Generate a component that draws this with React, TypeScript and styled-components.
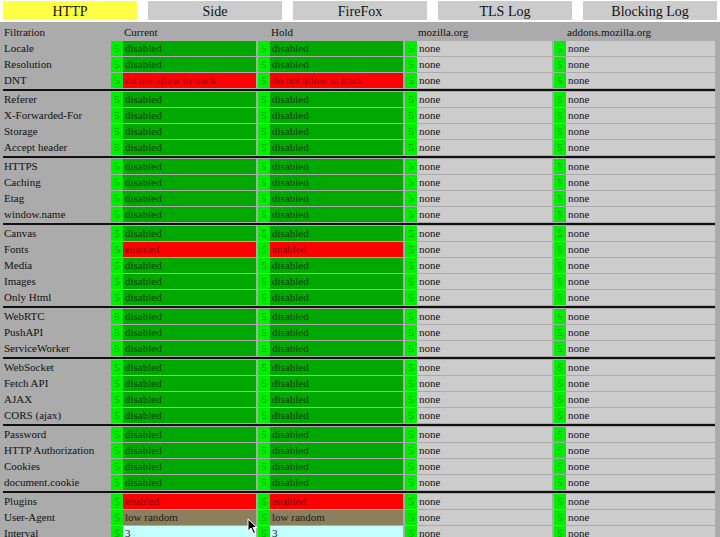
import React from 'react';
import styled, { createGlobalStyle } from 'styled-components';

const GlobalStyle = createGlobalStyle`
    html, body {
        margin: 0;
        padding: 0;
        overflow: hidden;
        background: #ababab;
        font-family: "Liberation Serif", "Times New Roman", serif;
    }
`;

type Kind = 'off' | 'on' | 'ua' | 'num';

interface Setting {
    label: string
    text: string
    kind: Kind
}

const off = (label: string): Setting => ({ label, text: 'disabled', kind: 'off' });

const GROUPS: Setting[][] = [
    [off('Locale'), off('Resolution'), { label: 'DNT', text: 'do not allow to track', kind: 'on' }],
    [off('Referer'), off('X-Forwarded-For'), off('Storage'), off('Accept header')],
    [off('HTTPS'), off('Caching'), off('Etag'), off('window.name')],
    [off('Canvas'), { label: 'Fonts', text: 'enabled', kind: 'on' }, off('Media'), off('Images'), off('Only Html')],
    [off('WebRTC'), off('PushAPI'), off('ServiceWorker')],
    [off('WebSocket'), off('Fetch API'), off('AJAX'), off('CORS (ajax)')],
    [off('Password'), off('HTTP Authorization'), off('Cookies'), off('document.cookie')],
    [
        { label: 'Plugins', text: 'enabled', kind: 'on' },
        { label: 'User-Agent', text: 'low random', kind: 'ua' },
        { label: 'Interval', text: '3', kind: 'num' },
    ],
];

const TABS = ['HTTP', 'Side', 'FireFox', 'TLS Log', 'Blocking Log'];
const SITES = ['mozilla.org', 'addons.mozilla.org'];

const KIND_COLORS: Record<Kind, { bg: string, fg: string }> = {
    off: { bg: '#00a800', fg: '#0b3d0b' },
    on: { bg: '#ff0000', fg: '#8a0000' },
    ua: { bg: '#8c7f5e', fg: '#1e1a10' },
    num: { bg: '#c4ffff', fg: '#111' },
};

const TabBar = styled.div`
    display: flex;
    gap: 11px;
    padding: 1px 3px 2px 3px;
    background: #fff;
`;

const Tab = styled.div<{ $active?: boolean }>`
    width: 134px;
    height: 19px;
    overflow: hidden;
    line-height: 22px;
    text-align: center;
    font-size: 14px;
    color: #111;
    background: ${p => (p.$active ? '#ffff44' : '#cccccc')};
`;

const Table = styled.div`
    display: flex;
    flex-direction: column;
`;

const Row = styled.div<{ $head?: boolean }>`
    display: grid;
    grid-template-columns: 109px 145px 145px 147px 161px;
    column-gap: 2px;
    height: ${p => (p.$head ? '18px' : '15px')};
    margin-bottom: 1px;
    font-size: 11px;
    line-height: ${p => (p.$head ? '20px' : '15px')};
`;

const Label = styled.div`
    padding-left: 4px;
    color: #111;
    white-space: nowrap;
    overflow: hidden;
`;

const HeadCell = styled.div`
    padding-left: 13px;
    color: #111;
    white-space: nowrap;
`;

const Pair = styled.div`
    display: flex;
`;

const Level = styled.div`
    width: 12px;
    flex: none;
    text-align: center;
    background: #00ee00;
    color: #00a000;
`;

const Value = styled.div<{ $kind?: Kind }>`
    flex: 1;
    padding-left: 2px;
    white-space: nowrap;
    overflow: hidden;
    background: ${p => (p.$kind ? KIND_COLORS[p.$kind].bg : '#cccccc')};
    color: ${p => (p.$kind ? KIND_COLORS[p.$kind].fg : '#111')};
`;

const Separator = styled.div`
    height: 2px;
    margin: 0 5px 1px 3px;
    background: #111;
`;

const Cursor = styled.svg`
    position: absolute;
    left: 247px;
    top: 518px;
`;

function SettingRow({ setting }: { setting: Setting }): React.JSX.Element {
    return <Row>
        <Label>{setting.label}</Label>
        <Pair>
            <Level>5</Level>
            <Value $kind={setting.kind}>{setting.text}</Value>
        </Pair>
        <Pair>
            <Level>5</Level>
            <Value $kind={setting.kind}>{setting.text}</Value>
        </Pair>
        {SITES.map(s =>
            <Pair key={s}>
                <Level>5</Level>
                <Value>none</Value>
            </Pair>
        )}
    </Row>;
}

export default function App(): React.JSX.Element {
    return <>
        <GlobalStyle />
        <TabBar>
            {TABS.map((t, i) => <Tab key={t} $active={i === 0}>{t}</Tab>)}
        </TabBar>
        <Table>
            <Row $head>
                <Label>Filtration</Label>
                <HeadCell>Current</HeadCell>
                <HeadCell>Hold</HeadCell>
                {SITES.map(s => <HeadCell key={s}>{s}</HeadCell>)}
            </Row>
            {GROUPS.map((group, gi) =>
                <React.Fragment key={`group-${gi}`}>
                    {gi > 0 && <Separator />}
                    {group.map(s => <SettingRow key={s.label} setting={s} />)}
                </React.Fragment>
            )}
        </Table>
        <Cursor width='12' height='17' viewBox='0 0 12 17'>
            <path d='M1 1 L1 13 L4 10 L6.5 15.5 L8.5 14.5 L6 9.5 L10 9.5 Z' fill='#000' stroke='#fff' strokeWidth='1' />
        </Cursor>
    </>;
}
